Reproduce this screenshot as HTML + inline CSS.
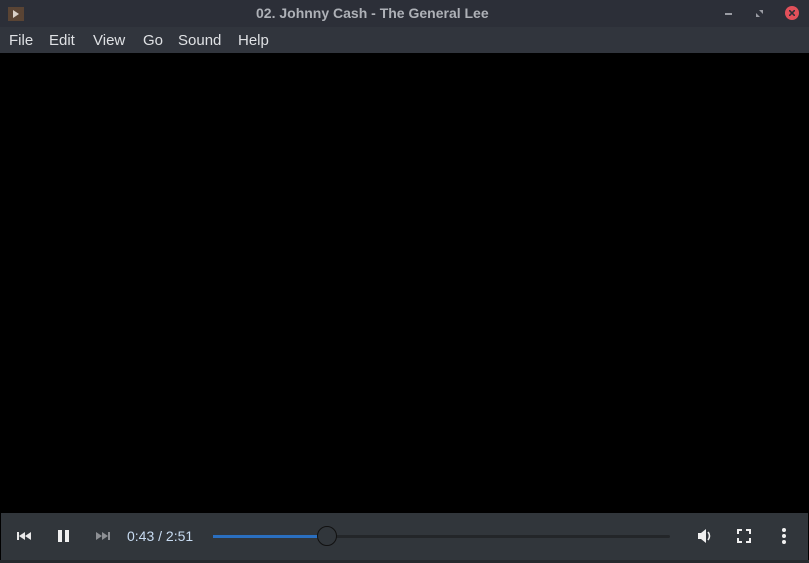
<!DOCTYPE html><html><head><style>
body{margin:0;width:809px;height:563px;background:#000;font-family:"Liberation Sans",sans-serif;overflow:hidden;position:relative}
.t{position:absolute;left:0;top:0;width:809px;height:27px;background:#2c2f38;}
.t .ti{position:absolute;left:256px;width:232px;top:5px;white-space:nowrap;color:#aeb1b7;font-weight:bold;font-size:14px}
.m{position:absolute;left:0;top:27px;width:809px;height:26px;background:#31353d;color:#dfe1e4;font-size:15px}
.m span{position:absolute;top:5px}
.c{position:absolute;left:1px;top:513px;width:807px;height:47px;background:#31363b}
.bot{position:absolute;left:0;top:560px;width:809px;height:3px;background:#262a2e}
</style></head><body>
<div class="t"><div style="position:absolute;left:8px;top:7px;width:16px;height:14px;background:#5a4434"></div>
<svg style="position:absolute;left:12px;top:10px" width="8" height="8"><path d="M1 0L7 4L1 8Z" fill="#d9d0c8"/></svg>
<div class="ti">02. Johnny Cash - The General Lee</div>
<div style="position:absolute;left:725px;top:13px;width:7px;height:2px;background:#9a9ca3"></div>
<svg style="position:absolute;left:756px;top:10px" width="7" height="7"><path d="M3 0H7V4Z M0 3V7H4Z" fill="#9a9ca3"/></svg>
<div style="position:absolute;left:785px;top:6px;width:14px;height:14px;border-radius:50%;background:#e1505a"></div>
<svg style="position:absolute;left:789px;top:10px" width="6" height="6"><path d="M0 0L6 6M6 0L0 6" stroke="#2c2f38" stroke-width="1.6"/></svg>
</div>
<div class="m"><span style="left:9px">File</span><span style="left:49px">Edit</span><span style="left:93px">View</span><span style="left:143px">Go</span><span style="left:178px">Sound</span><span style="left:238px">Help</span></div>
<div class="c">
<svg style="position:absolute;left:15px;top:18px" width="18" height="10"><rect x="1" y="1" width="2" height="8" fill="#e8e8e8"/><path d="M3 5L9 1V9Z M9 5L15 1V9Z" fill="#e8e8e8"/></svg>
<svg style="position:absolute;left:56px;top:16px" width="14" height="14"><rect x="1" y="1" width="4" height="12" fill="#f0f0f0"/><rect x="8" y="1" width="4" height="12" fill="#f0f0f0"/></svg>
<svg style="position:absolute;left:94px;top:18px" width="18" height="10"><path d="M1 1L7 5L1 9Z M7 1L13 5L7 9Z" fill="#8d9094"/><rect x="13" y="1" width="2" height="8" fill="#8d9094"/></svg>
<div style="position:absolute;left:126px;top:15px;font-size:14px;color:#c8dcf2">0:43 / 2:51</div>
<div style="position:absolute;left:212px;top:22px;width:457px;height:3px;border-radius:2px;background:#232629"></div>
<div style="position:absolute;left:212px;top:22px;width:115px;height:3px;background:#2a6fc0"></div>
<div style="position:absolute;left:316px;top:13px;width:18px;height:18px;border-radius:50%;background:#31363b;border:1px solid #111"></div>
<svg style="position:absolute;left:696px;top:15px" width="16" height="16"><path d="M1 5H4L9 1V15L4 11H1Z" fill="#f0f0f0"/><path d="M11 4Q14 8 11 12" stroke="#f0f0f0" stroke-width="1.6" fill="none"/></svg>
<svg style="position:absolute;left:736px;top:16px" width="14" height="14"><path d="M1 5V1H5M9 1H13V5M13 9V13H9M5 13H1V9" stroke="#f0f0f0" stroke-width="2" fill="none"/></svg>
<svg style="position:absolute;left:780px;top:14px" width="6" height="18"><circle cx="3" cy="3" r="2" fill="#f0f0f0"/><circle cx="3" cy="9" r="2" fill="#f0f0f0"/><circle cx="3" cy="15" r="2" fill="#f0f0f0"/></svg>
</div>
<div class="bot"></div>
</body></html>
